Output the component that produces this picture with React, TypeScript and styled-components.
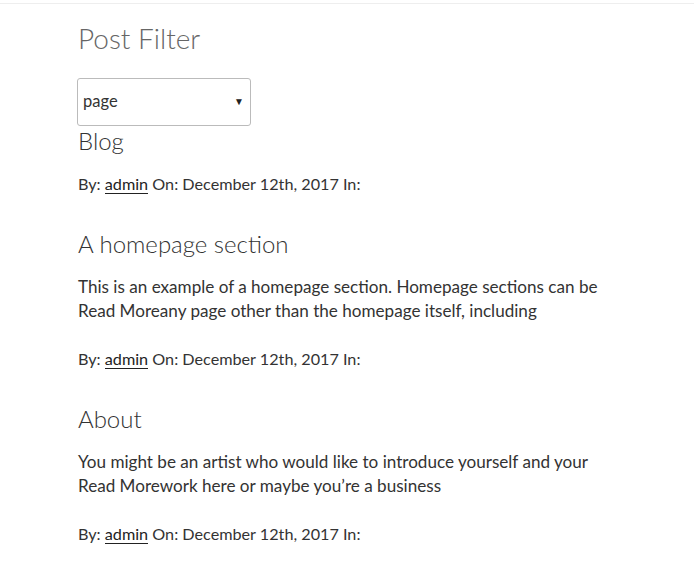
import React from "react";
import styled, { createGlobalStyle } from "styled-components";

const Global = createGlobalStyle`
  html, body { margin: 0; padding: 0; background: #fff; }
  body { font-family: "Lato", "Liberation Sans", sans-serif; color: #333; }
`;

const TopBar = styled.div`
  height: 3px;
  border-bottom: 1px solid #eee;
`;

const Content = styled.main`
  padding: 0 0 0 78px;
  width: 560px;
`;

const PageTitle = styled.h1`
  margin: 16px 0 0;
  font-size: 28px;
  line-height: 36px;
  font-weight: 300;
  color: #666;
`;

const SelectBox = styled.div`
  margin: 22px 0 0 -1px;
  box-sizing: border-box;
  width: 174px;
  height: 48px;
  border: 1px solid #bbb;
  border-radius: 3px;
  display: flex;
  align-items: center;
  justify-content: space-between;
  padding: 0 6px 2px 5px;
  font-size: 16.5px;
  color: #333;
`;

const Arrow = styled.span`
  font-size: 10px;
  color: #222;
`;

const Post = styled.article`
  padding-bottom: 33px;
`;

const PostTitle = styled.h2`
  margin: 0 0 16px;
  font-size: 24px;
  line-height: 30px;
  font-weight: 300;
  color: #333;
`;

const Excerpt = styled.p`
  margin: 1px 0 24px;
  font-size: 17.1px;
  line-height: 24px;
`;

const Meta = styled.p`
  margin: 0;
  font-size: 16.2px;
  line-height: 24px;
`;

const Author = styled.a`
  color: #222;
  text-decoration: none;
  border-bottom: 1px solid #222;
`;

type PostData = { title: string; excerpt?: [string, string] };

const posts: PostData[] = [
  { title: "Blog" },
  {
    title: "A homepage section",
    excerpt: [
      "This is an example of a homepage section. Homepage sections can be",
      "Read Moreany page other than the homepage itself, including",
    ],
  },
  {
    title: "About",
    excerpt: [
      "You might be an artist who would like to introduce yourself and your",
      "Read Morework here or maybe you\u2019re a business",
    ],
  },
];

export default function App() {
  return (
    <>
      <Global />
      <TopBar />
      <Content>
        <PageTitle>Post Filter</PageTitle>
        <SelectBox>
          <span>page</span>
          <Arrow>▼</Arrow>
        </SelectBox>
        {posts.map((p) => (
          <Post key={p.title}>
            <PostTitle>{p.title}</PostTitle>
            {p.excerpt && (
              <Excerpt>
                {p.excerpt[0]}
                <br />
                {p.excerpt[1]}
              </Excerpt>
            )}
            <Meta>
              By: <Author href="#">admin</Author> On: December 12th, 2017 In:
            </Meta>
          </Post>
        ))}
      </Content>
    </>
  );
}
